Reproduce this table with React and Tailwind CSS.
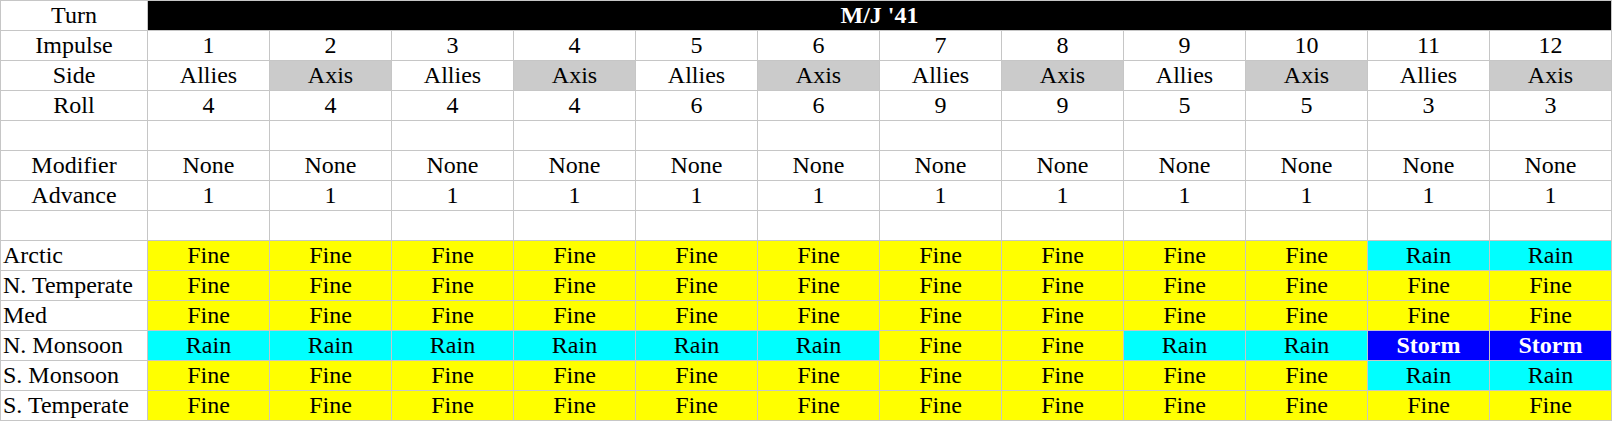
import React from 'react';

const N = 12;
const nums = Array.from({ length: N }, (_, i) => i + 1);
const sides = nums.map((n) => (n % 2 ? 'Allies' : 'Axis'));
const rolls = [4, 4, 4, 4, 6, 6, 9, 9, 5, 5, 3, 3];

const F = 'Fine';
const R = 'Rain';
const S = 'Storm';

const zones = [
  ['Arctic', [F, F, F, F, F, F, F, F, F, F, R, R]],
  ['N. Temperate', [F, F, F, F, F, F, F, F, F, F, F, F]],
  ['Med', [F, F, F, F, F, F, F, F, F, F, F, F]],
  ['N. Monsoon', [R, R, R, R, R, R, F, F, R, R, S, S]],
  ['S. Monsoon', [F, F, F, F, F, F, F, F, F, F, R, R]],
  ['S. Temperate', [F, F, F, F, F, F, F, F, F, F, F, F]],
];

const weatherCls = {
  Fine: 'bg-[#ffff00] text-black',
  Rain: 'bg-[#00ffff] text-black',
  Storm: 'bg-[#0000ff] text-white font-bold',
};

function Cell({ className = '', children }) {
  return (
    <div className={`flex items-center justify-center leading-[29px] whitespace-nowrap ${className}`}>
      {children}
    </div>
  );
}

function Row({ label, values, cls }) {
  return (
    <>
      <Cell className="bg-white">{label}</Cell>
      {values.map((v, i) => (
        <Cell key={i} className={cls ? cls(v, i) : 'bg-white'}>
          {v}
        </Cell>
      ))}
    </>
  );
}

export default function App() {
  const blanks = nums.map(() => '');
  return (
    <div className="w-[1612px] h-[421px] bg-white font-['Liberation_Serif',serif] text-[24px] text-black">
      <div className="grid grid-cols-[146px_repeat(12,121px)] auto-rows-[29px] gap-px p-px bg-[#c6c6c6]">
        <Cell className="bg-white">Turn</Cell>
        <Cell className="col-span-12 bg-black text-white font-bold">M/J '41</Cell>

        <Row label="Impulse" values={nums} />
        <Row
          label="Side"
          values={sides}
          cls={(v) => (v === 'Axis' ? 'bg-[#cbcbcb]' : 'bg-white')}
        />
        <Row label="Roll" values={rolls} />
        <Row label="" values={blanks} />
        <Row label="Modifier" values={nums.map(() => 'None')} />
        <Row label="Advance" values={nums.map(() => 1)} />
        <Row label="" values={blanks} />

        {zones.map(([name, w]) => (
          <React.Fragment key={name}>
            <div className="bg-white pl-[2px] leading-[29px] whitespace-nowrap">{name}</div>
            {w.map((v, i) => (
              <Cell key={i} className={weatherCls[v]}>
                {v}
              </Cell>
            ))}
          </React.Fragment>
        ))}
      </div>
    </div>
  );
}
